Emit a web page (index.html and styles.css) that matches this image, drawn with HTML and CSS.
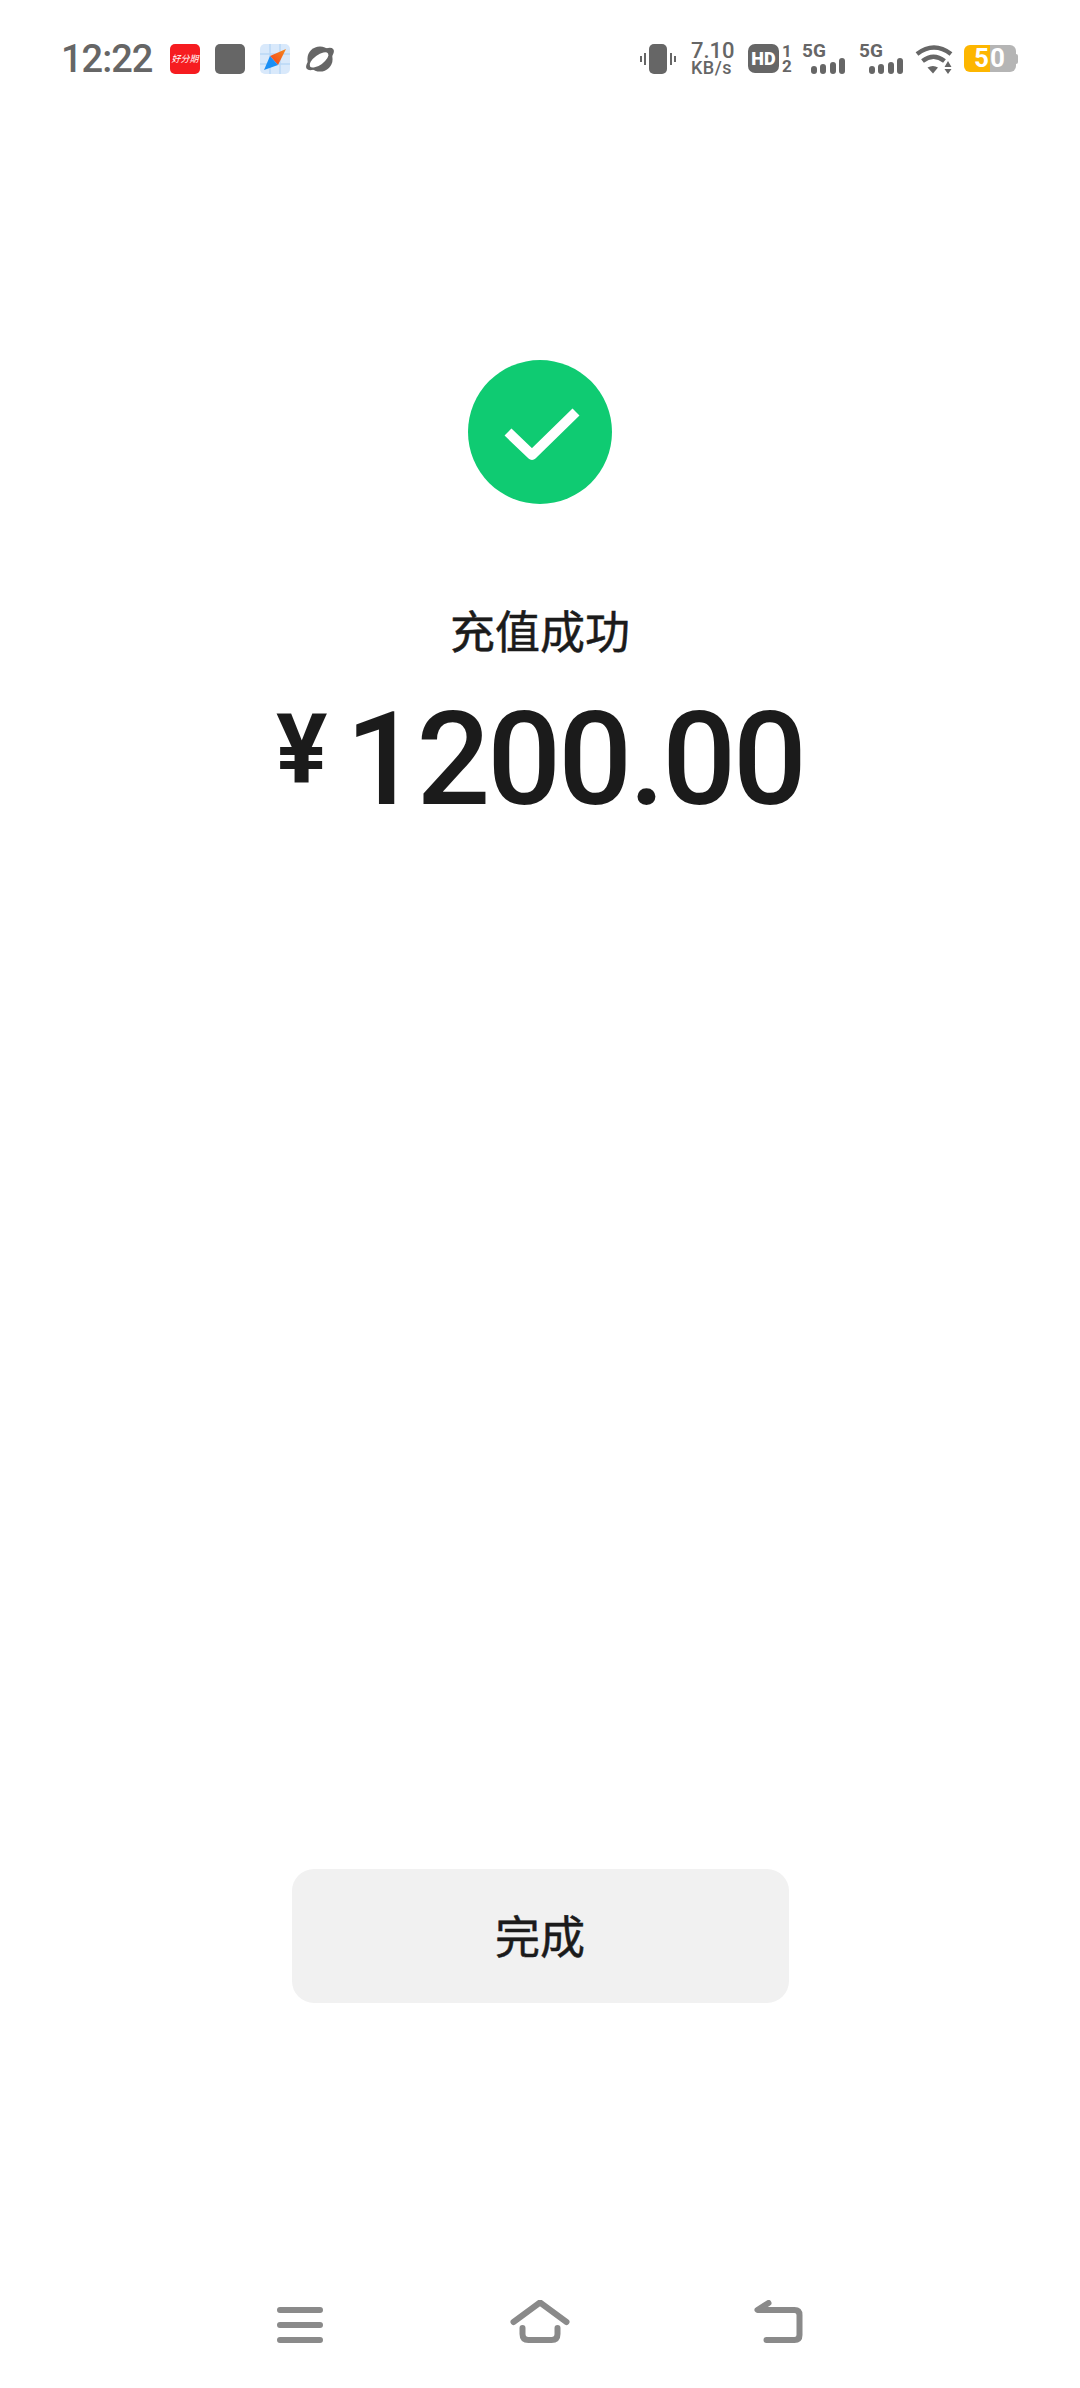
FILE: index.html
```html
<!DOCTYPE html>
<html lang="zh-CN">
<head>
  <meta charset="UTF-8">
  <meta name="viewport" content="width=device-width, initial-scale=1.0">
  <title>充值成功</title>
  <link rel="stylesheet" href="styles.css">
</head>
<body>
  <div class="page">
    <!-- Status bar -->
    <header class="status">
      <div class="status-left">
        <span class="time">12:22</span>
        <span class="app app-red">好分期</span>
        <span class="app app-grey"></span>
        <svg class="app" viewBox="0 0 30 30">
          <defs>
            <linearGradient id="needle" x1="1" y1="0" x2="0" y2="1">
              <stop offset="0" stop-color="#f58a1f"/>
              <stop offset="1" stop-color="#f2401a"/>
            </linearGradient>
          </defs>
          <rect width="30" height="30" rx="5" fill="#d9e9fb"/>
          <path d="M10 0V30M20 0V30M0 10H30M0 20H30" stroke="#b9d7f6" stroke-width="1.5"/>
          <path d="M26 5L10 12L18 21Z" fill="url(#needle)"/>
          <path d="M4 26L10 12L18 21Z" fill="#1a8ff5"/>
        </svg>
        <svg class="app" viewBox="0 0 31 30">
          <ellipse cx="15.500" cy="15" rx="17" ry="7" transform="rotate(-36 15.500 15)" fill="#666"/>
          <circle cx="15.500" cy="15" r="13" fill="#666"/>
          <ellipse cx="14.500" cy="16" rx="11.500" ry="5" transform="rotate(-36 14.500 16)" fill="#fff"/>
        </svg>
      </div>
      <div class="status-right">
        <svg class="vibrate" viewBox="0 0 36 30">
          <rect x="9" width="18" height="30" rx="5" fill="#666"/>
          <path d="M5 9V21M1 12V18M31 9V21M35 12V18" stroke="#666" stroke-width="2"/>
        </svg>
        <div class="speed"><span class="speed-num">7.10</span><span class="speed-unit">KB/s</span></div>
        <div class="hd">
          <span class="hd-box">HD</span>
          <div class="sim"><span>1</span><span>2</span></div>
        </div>
        <div class="net">
          <span class="net-label">5G</span>
          <div class="bars"><i class="b1"></i><i class="b2"></i><i class="b3"></i><i class="b4"></i></div>
        </div>
        <div class="net net-second">
          <span class="net-label">5G</span>
          <div class="bars"><i class="b1"></i><i class="b2"></i><i class="b3"></i><i class="b4"></i></div>
        </div>
        <svg class="wifi" viewBox="0 0 38 30">
          <path d="M2 10Q19 -3 36 10M7.500 17Q18.500 8.500 29.500 17" fill="none" stroke="#666" stroke-width="4.500"/>
          <path d="M12.500 23.500Q18 20.500 23 23.500L18 29.500Z" fill="#666"/>
          <path d="M33 17L36.500 23H29.500ZM29.500 25H36.500L33 30Z" fill="#666"/>
        </svg>
        <div class="battery">
          <div class="battery-body">50</div>
          <span class="battery-nub"></span>
        </div>
      </div>
    </header>

    <!-- Result -->
    <main class="result">
      <svg class="check" viewBox="0 0 144 144">
        <circle cx="72" cy="72" r="72" fill="#0fcb72"/>
        <path d="M40 72L64 95L108 52" fill="none" stroke="#fff" stroke-width="10" stroke-linejoin="round"/>
      </svg>
      <h1 class="title">充值成功</h1>
      <div class="amount"><span class="currency">¥</span><span class="value">1200.00</span></div>
    </main>

    <button class="done" type="button">完成</button>

    <!-- Navigation keys -->
    <nav class="nav">
      <svg class="key" viewBox="0 0 60 50">
        <path d="M11 10H51M11 25H51M11 40H51" stroke="#8a8a8a" stroke-width="6" stroke-linecap="round" fill="none"/>
      </svg>
      <svg class="key" viewBox="0 0 60 50">
        <path d="M3.500 22L30 2.500L56.500 22" stroke="#8a8a8a" stroke-width="6" stroke-linecap="round" stroke-linejoin="round" fill="none"/>
        <path d="M12.500 28V34Q12.500 40 18.500 40H41.500Q47.500 40 47.500 34V28" stroke="#8a8a8a" stroke-width="6" stroke-linecap="round" fill="none"/>
      </svg>
      <svg class="key" viewBox="0 0 60 50">
        <path d="M17.500 3L6.500 10H43.500Q48.500 10 48.500 15V35Q48.500 40 43.500 40H15.500" stroke="#8a8a8a" stroke-width="6" stroke-linecap="round" stroke-linejoin="round" fill="none"/>
      </svg>
    </nav>
  </div>
</body>
</html>
```

FILE: styles.css
```css
* {
  box-sizing: border-box;
}

html, body {
  margin: 0;
  padding: 0;
  background-color: #fff;
}

body {
  font-family: Roboto, "Noto Sans CJK SC", sans-serif;
  color: #1b1b1b;
}

.page {
  height: 2388px;
  display: flex;
  flex-direction: column;
  align-items: center;
}

/* Status bar */
.status {
  width: 100%;
  height: 117px;
  padding: 0 62px 0 61px;
  display: flex;
  align-items: center;
  justify-content: space-between;
  color: #666;
}

.status-left,
.status-right {
  display: flex;
  align-items: center;
}

.status-left {
  gap: 15px;
}

.time {
  width: 94px;
  font-size: 38px;
  font-weight: 500;
  letter-spacing: -1px;
  white-space: nowrap;
}

.app {
  width: 30px;
  height: 30px;
  border-radius: 5px;
  display: block;
  overflow: visible;
}

.app-red {
  overflow: hidden;
  background-color: #f61c20;
  color: #fff;
  font-size: 9px;
  font-style: italic;
  line-height: 30px;
  text-align: center;
  white-space: nowrap;
}

.app-grey {
  background-color: #666;
}

.vibrate {
  width: 36px;
  height: 30px;
}

.speed {
  width: 44px;
  display: flex;
  flex-direction: column;
  margin-left: 15px;
  font-weight: 500;
  white-space: nowrap;
}

.speed-num {
  font-size: 22px;
  line-height: 19px;
}

.speed-unit {
  font-size: 18px;
  line-height: 16px;
  letter-spacing: 0.5px;
}

.hd {
  display: flex;
  align-items: center;
  margin-left: 13px;
}

.hd-box {
  width: 31px;
  height: 29px;
  border-radius: 7px;
  background-color: #666;
  color: #fff;
  font-size: 18px;
  font-weight: 900;
  line-height: 29px;
  text-align: center;
}

.sim {
  width: 9px;
  display: flex;
  flex-direction: column;
  margin-left: 3px;
  font-size: 17px;
  font-weight: 700;
  line-height: 15px;
  text-align: center;
}

.net {
  width: 43px;
  height: 30px;
  margin-left: 11px;
  display: flex;
  flex-direction: column;
  justify-content: space-between;
}

.net-second {
  width: 44px;
  margin-left: 14px;
}

.net-label {
  font-size: 19px;
  font-weight: 700;
  line-height: 14px;
}

.bars {
  display: flex;
  align-items: flex-end;
  justify-content: flex-end;
  gap: 3.5px;
}

.bars i {
  width: 6px;
  border-radius: 3px;
  background-color: #666;
}

.b1 { height: 8px; }
.b2 { height: 10px; }
.b3 { height: 12px; }
.b4 { height: 16px; }

.wifi {
  width: 38px;
  height: 30px;
  margin-left: 12px;
}

.battery {
  display: flex;
  align-items: center;
  margin-left: 11px;
}

.battery-body {
  width: 52px;
  height: 27px;
  border-radius: 6px;
  background: linear-gradient(90deg, #fdb600 50%, #b5b5b5 50%);
  color: #fff;
  font-size: 26px;
  font-weight: 700;
  letter-spacing: 1px;
  line-height: 27px;
  text-align: center;
}

.battery-nub {
  width: 2px;
  height: 10px;
  border-radius: 0 2px 2px 0;
  background-color: #b5b5b5;
}

/* Result */
.result {
  display: flex;
  flex-direction: column;
  align-items: center;
  padding-top: 243px;
}

.check {
  width: 144px;
  height: 144px;
  display: block;
}

.title {
  margin: 100px 0 0;
  font-size: 45px;
  font-weight: 400;
  -webkit-text-stroke: 0.5px #1b1b1b;
  line-height: 60px;
}

.amount {
  display: flex;
  align-items: flex-start;
  margin-top: 21px;
}

.currency {
  margin-top: 14px;
  margin-right: 18px;
  font-size: 96px;
  font-weight: 700;
  line-height: 100px;
}

.value {
  font-size: 130px;
  font-weight: 500;
  letter-spacing: -3px;
  line-height: 150px;
}

.done {
  width: 497px;
  height: 134px;
  margin-top: auto;
  padding-bottom: 5px;
  border: none;
  border-radius: 22px;
  background-color: #f1f1f1;
  color: #1b1b1b;
  font-family: inherit;
  font-size: 45px;
  font-weight: 400;
  -webkit-text-stroke: 0.5px #1b1b1b;
  cursor: pointer;
}

/* Navigation keys */
.nav {
  display: flex;
  justify-content: center;
  gap: 181px;
  margin-top: 297px;
  padding-bottom: 38px;
}

.key {
  width: 60px;
  height: 50px;
  display: block;
}
```
